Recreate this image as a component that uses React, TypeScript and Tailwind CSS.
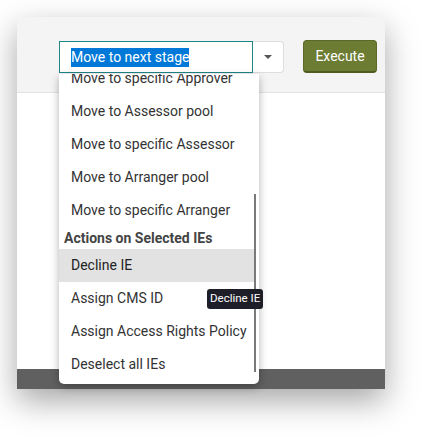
import React from "react";

const items1 = [
  "Move to specific Approver",
  "Move to Assessor pool",
  "Move to specific Assessor",
  "Move to Arranger pool",
  "Move to specific Arranger",
];
const items2 = ["Decline IE", "Assign CMS ID", "Assign Access Rights Policy", "Deselect all IEs"];

export default function App() {
  return (
    <div
      className="w-[433px] h-[437px] bg-white pl-[17px] pt-[17px]"
      style={{ fontFamily: "Roboto, 'Liberation Sans', sans-serif" }}
    >
      <div className="relative w-[368px] h-[372px] flex flex-col shadow-[0_12px_30px_rgba(0,0,0,0.35)]">
        <div className="h-[76px] shrink-0 bg-[#f4f4f4] border-b border-[#e2e2e2] flex items-start pl-[42px] pt-[23px]">
          <div className="flex mt-[1px]">
            <div className="w-[194px] h-[32px] border border-[#1f8585] bg-white flex items-center pl-[11px] text-[14px] text-[#333]">
              <span className="bg-[#0078d7] text-white leading-[19px]">Move to next stage</span>
            </div>
            <div className="w-[31px] h-[32px] border border-l-0 border-[#dedede] rounded-r-[4px] bg-white flex items-center justify-center">
              <div className="w-0 h-0 border-l-[4px] border-r-[4px] border-t-[4px] border-l-transparent border-r-transparent border-t-[#555]" />
            </div>
          </div>
          <button className="ml-[19px] w-[74px] h-[33px] rounded-[4px] bg-[#6c7c33] border border-[#5a6828] border-b-[2px] border-b-[#4f5b22] text-white text-[14px] flex items-center justify-center">
            Execute
          </button>
        </div>
        <div className="flex-1 bg-white" />
        <div className="h-[20px] shrink-0 bg-[#606060]" />

        <div className="absolute left-[42px] top-[57px] w-[200px] h-[310px] bg-white rounded-b-[5px] shadow-[0_3px_8px_rgba(0,0,0,0.3)] overflow-hidden">
          <div className="-mt-[12px] text-[14px] text-[#333]">
            {items1.map((t) => (
              <div key={t} className="h-[33px] flex items-center pl-[12px]">
                {t}
              </div>
            ))}
            <div className="h-[22px] flex items-center pl-[5px] text-[14px] font-bold text-[#444]">
              Actions on Selected IEs
            </div>
            {items2.map((t, i) => (
              <div
                key={t}
                className={
                  i === 0
                    ? "h-[33px] flex items-center pl-[12px] bg-[#e2e2e2] text-[#222] mr-[4px]"
                    : "h-[33px] flex items-center pl-[12px]"
                }
              >
                {t}
              </div>
            ))}
          </div>
          <div className="absolute left-[195px] top-[120px] w-[2px] h-[178px] bg-[#7a7a7a]" />
        </div>

        <div className="absolute left-[190px] top-[272px] h-[20px] px-[3px] rounded-[3px] bg-[#1e1e28] text-white text-[11.5px] flex items-center whitespace-nowrap">
          Decline IE
        </div>
      </div>
    </div>
  );
}
